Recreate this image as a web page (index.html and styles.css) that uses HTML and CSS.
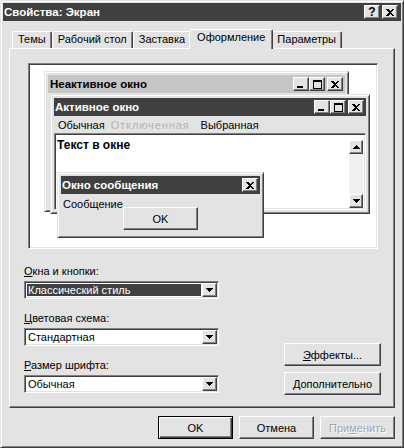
FILE: index.html
```html
<!DOCTYPE html>
<html>
<head>
<meta charset="utf-8">
<link rel="stylesheet" href="styles.css">
</head>
<body>
<div class="window">
  <div class="titlebar">
    <span class="title">Свойства: Экран</span>
    <div class="capbtns">
      <span class="cap help">?</span>
      <span class="cap close"><svg width="8" height="7" viewBox="0 0 8 7"><path d="M0 0h2l2 2 2-2h2L5 3.5 8 7H6L4 5 2 7H0l3-3.5z"/></svg></span>
    </div>
  </div>

  <div class="tabs">
    <div class="tab">Темы</div>
    <div class="tab">Рабочий стол</div>
    <div class="tab">Заставка</div>
    <div class="tab sel">Оформление</div>
    <div class="tab">Параметры</div>
  </div>

  <div class="panel">
    <div class="preview">
      <div class="pw inactive">
        <div class="pcap">
          <span>Неактивное окно</span>
          <div class="capbtns">
            <span class="cap min"><svg width="8" height="7" viewBox="0 0 8 7"><path d="M0 5h6v2H0z"/></svg></span>
            <span class="cap max"><svg width="9" height="9" viewBox="0 0 9 9"><path fill-rule="evenodd" d="M0 0h9v9H0zM1 2v6h7V2z"/></svg></span>
            <span class="cap close"><svg width="8" height="7" viewBox="0 0 8 7"><path d="M0 0h2l2 2 2-2h2L5 3.5 8 7H6L4 5 2 7H0l3-3.5z"/></svg></span>
          </div>
        </div>
      </div>

      <div class="pw active">
        <div class="pcap">
          <span>Активное окно</span>
          <div class="capbtns">
            <span class="cap min"><svg width="8" height="7" viewBox="0 0 8 7"><path d="M0 5h6v2H0z"/></svg></span>
            <span class="cap max"><svg width="9" height="9" viewBox="0 0 9 9"><path fill-rule="evenodd" d="M0 0h9v9H0zM1 2v6h7V2z"/></svg></span>
            <span class="cap close"><svg width="8" height="7" viewBox="0 0 8 7"><path d="M0 0h2l2 2 2-2h2L5 3.5 8 7H6L4 5 2 7H0l3-3.5z"/></svg></span>
          </div>
        </div>
        <div class="menu">
          <span class="mi">Обычная</span>
          <span class="mi dis">Отключенная</span>
          <span class="mi hot">Выбранная</span>
        </div>
        <div class="wtext">
          <div class="wtext-body">Текст в окне</div>
          <div class="sb">
            <span class="sbtn"><svg width="7" height="4" viewBox="0 0 7 4"><path d="M3.5 0L7 4H0z"/></svg></span>
            <span class="sbtn"><svg width="7" height="4" viewBox="0 0 7 4"><path d="M0 0h7L3.5 4z"/></svg></span>
          </div>
        </div>
      </div>

      <div class="pw msg">
        <div class="pcap">
          <span>Окно сообщения</span>
          <div class="capbtns">
            <span class="cap close"><svg width="8" height="7" viewBox="0 0 8 7"><path d="M0 0h2l2 2 2-2h2L5 3.5 8 7H6L4 5 2 7H0l3-3.5z"/></svg></span>
          </div>
        </div>
        <div class="mbody">
          <span class="mtext">Сообщение</span>
          <span class="btn mok">OK</span>
        </div>
      </div>
    </div>

    <div class="form">
      <div class="fields">
        <div class="flabel"><u>О</u>кна и кнопки:</div>
        <div class="combo">
          <span class="cval hl">Классический стиль</span>
          <span class="cdrop"><svg width="7" height="4" viewBox="0 0 7 4"><path d="M0 0h7L3.5 4z"/></svg></span>
        </div>
        <div class="flabel"><u>Ц</u>ветовая схема:</div>
        <div class="combo">
          <span class="cval">Стандартная</span>
          <span class="cdrop"><svg width="7" height="4" viewBox="0 0 7 4"><path d="M0 0h7L3.5 4z"/></svg></span>
        </div>
        <div class="flabel"><u>Р</u>азмер шрифта:</div>
        <div class="combo last">
          <span class="cval">Обычная</span>
          <span class="cdrop"><svg width="7" height="4" viewBox="0 0 7 4"><path d="M0 0h7L3.5 4z"/></svg></span>
        </div>
      </div>
      <div class="side">
        <button class="btn wide"><u>Э</u>ффекты...</button>
        <button class="btn wide"><u>Д</u>ополнительно</button>
      </div>
    </div>
  </div>

  <div class="actions">
    <button class="btn def">OK</button>
    <button class="btn">Отмена</button>
    <button class="btn dis">При<u>м</u>енить</button>
  </div>
</div>
</body>
</html>
```

FILE: styles.css
```css
* { box-sizing: border-box; }
html, body { margin: 0; padding: 0; }
body {
  background: #e3e3e3;
  font-family: "Liberation Sans", Arial, sans-serif;
  font-size: 11px;
  color: #000;
}
u { text-decoration: underline; text-underline-offset: 1px; }

.window {
  width: 404px;
  height: 448px;
  background: #e3e3e3;
  border: 1px solid;
  border-color: #e3e3e3 #404040 #404040 #e3e3e3;
  box-shadow: inset 1px 1px #fff, inset -1px -1px #808080;
  padding: 2px;
  display: flex;
  flex-direction: column;
}

.titlebar {
  height: 18px;
  flex: none;
  background: #404040;
  color: #fff;
  display: flex;
  align-items: center;
  justify-content: space-between;
  padding: 0 3px 0 1px;
}
.title { font-weight: bold; font-size: 11.5px; line-height: 14px; }

.capbtns { display: flex; }
.cap {
  width: 16px;
  height: 14px;
  background: #e3e3e3;
  color: #000;
  border: 1px solid;
  border-color: #fff #404040 #404040 #fff;
  box-shadow: inset -1px -1px #808080;
  display: flex;
  align-items: center;
  justify-content: center;
}
.cap svg { display: block; shape-rendering: crispEdges; }
.cap.close { margin-left: 2px; }
.cap.help { font-weight: bold; font-size: 12px; line-height: 12px; }
.cap.min svg { margin: 0 1px 0 0; }

/* tabs */
.tabs {
  height: 19px;
  flex: none;
  margin: 8px 6px 0;
  padding-left: 3px;
  display: flex;
  align-items: flex-end;
  position: relative;
  z-index: 1;
}
.tab {
  height: 17px;
  padding: 0 5px;
  line-height: 14px;
  border: 1px solid;
  border-bottom: none;
  border-color: #fff #404040 transparent #fff;
  border-radius: 2px 2px 0 0;
  box-shadow: inset -1px 0 #808080;
  background: #e3e3e3;
  white-space: nowrap;
}
.tab.sel {
  height: 20px;
  margin: 0 -2px -1px;
  padding: 0 7px;
  line-height: 15px;
  position: relative;
  z-index: 2;
}

/* panel */
.panel {
  margin: 0 6px;
  border: 1px solid;
  border-color: #fff #404040 #404040 #fff;
  box-shadow: inset -1px -1px #808080;
  padding: 14px 13px 12px 14px;
  flex: none;
}

.preview {
  position: relative;
  width: 350px;
  height: 186px;
  margin-left: 4px;
  background: #fff;
  border: 1px solid;
  border-color: #808080 #fff #fff #808080;
  box-shadow: inset 1px 1px #404040, inset -1px -1px #e3e3e3;
  overflow: hidden;
}

.pw {
  position: absolute;
  background: #e3e3e3;
  border: 1px solid;
  border-color: #e3e3e3 #404040 #404040 #e3e3e3;
  box-shadow: inset 1px 1px #fff, inset -1px -1px #808080;
  padding: 3px;
  display: flex;
  flex-direction: column;
}
.pw.inactive { left: 15px; top: 7px; width: 305px; height: 141px; }
.pw.active { left: 21px; top: 30px; width: 320px; height: 120px; }
.pw.msg { left: 28px; top: 108px; width: 207px; height: 66px; }

.pcap {
  height: 18px;
  flex: none;
  display: flex;
  align-items: center;
  justify-content: space-between;
  padding: 0 2px 0 1px;
  font-weight: bold;
  font-size: 11.5px;
  background: #404040;
  color: #fff;
}
.inactive .pcap { background: #c6c6c6; color: #000; padding-left: 2px; }

.menu {
  height: 17px;
  flex: none;
  display: flex;
  align-items: center;
  padding-left: 1px;
}
.mi { padding: 0 3px; line-height: 14px; }
.mi.dis { color: #b4b4b4; letter-spacing: 0.9px; }
.mi.hot { margin-left: 5px; padding: 0 3px; }

.wtext {
  flex: 1;
  display: flex;
  background: #fff;
  border: 1px solid;
  border-color: #808080 #fff #fff #808080;
  box-shadow: inset 1px 1px #404040, inset -1px -1px #e3e3e3;
  padding: 2px 2px 1px 2px;
}
.wtext-body {
  flex: 1;
  font-weight: bold;
  font-size: 12px;
  line-height: 13px;
  padding-top: 3px;
}
.sb {
  width: 14px;
  margin-top: 4px;
  display: flex;
  flex-direction: column;
  justify-content: space-between;
  background: #f0f0f0;
}
.sbtn {
  height: 14px;
  background: #e3e3e3;
  border: 1px solid;
  border-color: #fff #404040 #404040 #fff;
  box-shadow: inset -1px -1px #808080;
  display: flex;
  align-items: center;
  justify-content: center;
}
.sbtn svg { display: block; shape-rendering: crispEdges; }

.mbody {
  flex: 1;
  display: grid;
  padding-top: 4px;
}
.mtext { grid-area: 1 / 1; align-self: start; margin-left: 2px; line-height: 13px; }
.mok {
  grid-area: 1 / 1;
  align-self: start;
  justify-self: center;
  margin-top: 9px;
  width: 72px;
}

/* buttons */
.btn {
  width: 75px;
  height: 23px;
  padding: 0;
  font: inherit;
  color: #000;
  background: #e3e3e3;
  border: 1px solid;
  border-color: #fff #404040 #404040 #fff;
  box-shadow: inset -1px -1px #808080;
  display: flex;
  align-items: center;
  justify-content: center;
}
.btn.wide { width: 97px; }
.btn.def {
  border-color: #000;
  box-shadow: inset 1px 1px #fff, inset -1px -1px #404040, inset -2px -2px #808080;
}
.btn.dis { color: #a4a4a4; text-shadow: 1px 1px #fff; }

/* form */
.form {
  margin-top: 16px;
  display: flex;
  justify-content: space-between;
  align-items: flex-end;
}
.fields {
  width: 195px;
  display: flex;
  flex-direction: column;
  padding-bottom: 2px;
}
.flabel { height: 13px; line-height: 13px; white-space: nowrap; }
.combo {
  height: 18px;
  margin: 3px 0 13px;
  display: flex;
  background: #fff;
  border: 1px solid;
  border-color: #808080 #fff #fff #808080;
  box-shadow: inset 1px 1px #404040, inset -1px -1px #e3e3e3;
  padding: 1px;
}
.combo.last { margin-bottom: 0; }
.cval {
  flex: 1;
  padding-left: 2px;
  line-height: 14px;
  white-space: nowrap;
}
.cval.hl {
  background: #404040;
  color: #fff;
  margin: 1px;
  line-height: 12px;
  padding-left: 1px;
}
.cdrop {
  width: 15px;
  background: #e3e3e3;
  border: 1px solid;
  border-color: #fff #404040 #404040 #fff;
  box-shadow: inset -1px -1px #808080;
  display: flex;
  align-items: center;
  justify-content: center;
}
.cdrop svg { display: block; shape-rendering: crispEdges; }

.side {
  width: 97px;
  display: flex;
  flex-direction: column;
  gap: 6px;
}

.actions {
  margin: 8px 6px 0 0;
  display: flex;
  justify-content: flex-end;
  gap: 6px;
}
```
